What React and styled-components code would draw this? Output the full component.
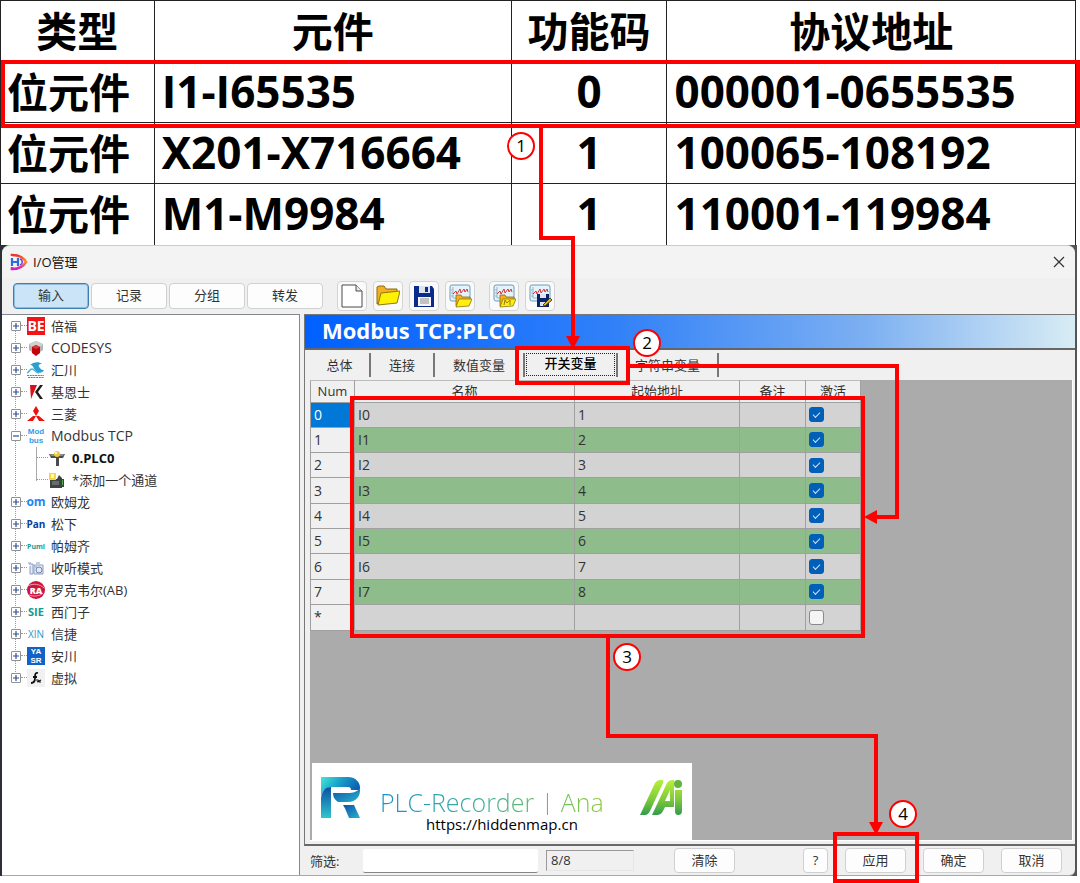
import React from 'react'
import styled, { createGlobalStyle, css } from 'styled-components'

const GlobalStyle = createGlobalStyle`
*, *::before, *::after {
    box-sizing: border-box;
}
body {
    margin: 0;
    background: #fff;
    color: #333;
    font-family: "Open Sans", "Noto Sans CJK SC", sans-serif;
    font-size: 13px;
    font-feature-settings: "calt" 0, "locl" 0;
    line-height: 18px;
}
button, input {
    font: inherit;
    color: inherit;
}
`;

const addresses = [
    { type: '位元件', name: 'I1-I65535', code: '0', range: '000001-0655535' },
    { type: '位元件', name: 'X201-X716664', code: '1', range: '100065-108192' },
    { type: '位元件', name: 'M1-M9984', code: '1', range: '110001-119984' },
];

const switches = ['I0', 'I1', 'I2', 'I3', 'I4', 'I5', 'I6', 'I7'];

function Brand({ text, color, size, y = 13, weight = 700, bg }) {
    return (
        <svg width="18" height="18" viewBox="0 0 18 18" overflow="visible" aria-hidden="true">
            {bg && <rect width="18" height="18" fill={bg} />}
            <text x="9" y={y} fontSize={size} fontWeight={weight} fill={color} textAnchor="middle">{text}</text>
        </svg>
    )
}

function TwoLines({ top, bottom, color, bg }) {
    return (
        <svg width="18" height="18" viewBox="0 0 18 18" overflow="visible" fontFamily="Liberation Sans, sans-serif" fontSize="8" fontWeight="700" aria-hidden="true">
            {bg && <rect width="18" height="18" fill={bg} />}
            <text x="9" y="7" fill={color} textAnchor="middle">{top}</text>
            <text x="9" y="16" fill={color} textAnchor="middle">{bottom}</text>
        </svg>
    )
}

const CodesysIcon = () => (
    <svg width="18" height="18" viewBox="0 0 18 18" aria-hidden="true">
        <path d="M9 2l7 3v6l-3 2V8L9 6 5 8v5l-3-2V5z" fill="#b4b4b4" />
        <path d="M9 2l7 3-3 3-4-2-4 2-3-3z" fill="#d0d0d0" />
        <path d="M9 6l4 2v6l-4 3-4-3V8z" fill="#c4040c" />
        <path d="M9 6l4 2-4 2-4-2z" fill="#d83838" />
    </svg>
)

const InovanceIcon = () => (
    <svg width="18" height="18" viewBox="0 0 18 18" fill="none" aria-hidden="true">
        <path d="M3 4c3-3 9-4 12-1-4 0-4 2-2 4 1 2 3 2 4 2-2 4-7 3-9 0C6 6 6 4 3 4z" fill="#2a9fd0" />
        <path d="M0 12c2-1 3-4 5-4 3 0 3 4 7 4" stroke="#4db3dc" strokeWidth="1.5" />
        <path d="M0 14.5h17M1 16.5h16" stroke="#777" strokeWidth="1.2" strokeDasharray="2 .7" />
    </svg>
)

const KeyenceIcon = () => (
    <svg width="18" height="18" viewBox="0 0 18 18" aria-hidden="true">
        <path d="M3 2h7L4 16z" fill="#d8101c" />
        <path d="M13 2h3l-5 7 5 7h-3L8 9z" fill="#1d1d1d" />
    </svg>
)

const MitsubishiIcon = () => (
    <svg width="18" height="18" viewBox="0 0 18 18" fill="#f01010" aria-hidden="true">
        <path d="M9 1l3 5-3 5-3-5zM6 11h3l-3 5H0zM12 11H9l3 5h6z" />
    </svg>
)

const ListenIcon = () => (
    <svg width="18" height="18" viewBox="0 0 18 18" fill="none" stroke="#8c9cc4" aria-hidden="true">
        <path d="M2 5h4v10H3V7M7 6h9v9H7z" fill="#e4e9f5" />
        <circle cx="12" cy="11" r="3" stroke="#6f84b8" />
        <path d="M1 4h3M9 4h4M8 8h2" />
    </svg>
)

const RockwellIcon = () => (
    <svg width="18" height="18" viewBox="0 0 18 18" aria-hidden="true">
        <circle cx="9" cy="9" r="9" fill="#cd163f" />
        <path d="M1 5c5-3 12-2 16 2M2 14c5 2 11 1 14-2" stroke="#f29aa8" strokeWidth="1" fill="none" />
        <text x="9" y="13" fontSize="9" fontWeight="800" fill="#fff" textAnchor="middle">RA</text>
    </svg>
)

const VirtualIcon = () => (
    <svg width="18" height="18" viewBox="0 0 18 18" aria-hidden="true">
        <rect width="18" height="18" fill="#f1f1f1" />
        <path d="M11 4c-3-1-3 2-3 5s-1 5-4 5M6 8h4" stroke="#111" strokeWidth="1.8" fill="none" />
        <path d="M9 11l2 0 1 2h2M10 13l4-2" stroke="#111" strokeWidth="1.2" fill="none" />
    </svg>
)

const ChannelIcon = () => (
    <svg width="18" height="18" viewBox="0 0 18 18" aria-hidden="true">
        <path d="M1 5h16l-2 4h-4v8H8V9H3z" fill="#4b4b4b" />
        <path d="M2 5h14l-1 2H3z" fill="#8c8c8c" />
        <circle cx="9" cy="5" r="3" fill="#f0c63c" />
        <circle cx="8" cy="4" r="1.3" fill="#fff2b8" />
    </svg>
)

const AddChannelIcon = () => (
    <svg width="18" height="18" viewBox="0 0 18 18" aria-hidden="true">
        <path d="M2 8h7l2-4 3 3v1h2v8h-2v1H2z" fill="#3f4340" />
        <path d="M14 9h1v5h-1z" fill="#4aa84e" />
        <path d="M4 10h7v4H4z" fill="#686c68" />
        <path d="M1 2h7v7H1z" fill="#f6d540" />
        <path d="M3 3h3v4H3z" fill="#fff8ae" />
    </svg>
)

const devices = [
    { label: '倍福', icon: <Brand text="BE" color="#fff" bg="#f01414" size={14} y={14} /> },
    { label: 'CODESYS', latin: true, icon: <CodesysIcon /> },
    { label: '汇川', icon: <InovanceIcon /> },
    { label: '基恩士', icon: <KeyenceIcon /> },
    { label: '三菱', icon: <MitsubishiIcon /> },
    {
        label: 'Modbus TCP', latin: true, open: true,
        icon: <TwoLines top="Mod" bottom="bus" color="#2f9bea" />,
    },
    { label: '欧姆龙', icon: <Brand text="om" color="#1c86f2" size={12} /> },
    { label: '松下', icon: <Brand text="Pan" color="#0b3f9c" size={10} /> },
    { label: '帕姆齐', icon: <Brand text="Pumi" color="#159a94" size={7} y={12} /> },
    { label: '收听模式', icon: <ListenIcon /> },
    { label: '罗克韦尔(AB)', icon: <RockwellIcon /> },
    { label: '西门子', icon: <Brand text="SIE" color="#119a94" size={11} /> },
    { label: '信捷', icon: <Brand text="XIN" color="#2c97c9" size={10} weight={500} /> },
    { label: '安川', icon: <TwoLines top="YA" bottom="SR" color="#fff" bg="#1262c8" /> },
    { label: '虚拟', icon: <VirtualIcon /> },
];

const NewFileIcon = () => (
    <svg width="24" height="24" viewBox="0 0 24 24" aria-hidden="true">
        <path d="M2 1h14l6 6v16H2z" fill="#fff" stroke="#4a4a4a" />
        <path d="M16 1v6h6" fill="#e8e8e8" stroke="#4a4a4a" />
    </svg>
)

const OpenFolderIcon = () => (
    <svg width="24" height="24" viewBox="0 0 24 24" strokeLinejoin="round" aria-hidden="true">
        <path d="M1 20V3l2-1h5l2 3h11v4z" fill="#f4b020" stroke="#8a6a10" />
        <path d="M2 21L5 9l19-2-3 12z" fill="#fff200" stroke="#8a7a10" />
    </svg>
)

const SaveIcon = () => (
    <svg width="24" height="24" viewBox="0 0 24 24" aria-hidden="true">
        <path d="M2 2h18l2 3v18H2z" fill="#0a2a8c" />
        <path d="M7 2h11v7H7z" fill="#dfe3ee" />
        <path d="M13 3h3v5h-3z" fill="#0a2a8c" />
        <path d="M6 13h13v9H6z" fill="#f4f4f4" />
        <path d="M8 15h9M8 17h9M8 19h9" stroke="#8f8f8f" />
    </svg>
)

function ChartIcon({ children }) {
    return (
        <svg width="24" height="24" viewBox="0 0 24 24" strokeLinejoin="round" aria-hidden="true">
            <rect x="2" y="1" width="20" height="16" rx="2" fill="#e3f3fb" stroke="#6f9cb4" />
            <path d="M5 3v11h15M3 6h2M3 9h2M3 12h2" stroke="#8ab" strokeWidth=".8" fill="none" />
            <path d="M5 10l3-3 1 3 3-5 1 4 3-4 1 3 2-3 1 3" stroke="#d8343c" fill="none" />
            {children}
        </svg>
    )
}

const SmallFolder = () => (
    <>
        <path d="M8 22V11h5l1 2h8v3z" fill="#f4b020" stroke="#8a6a10" strokeWidth=".8" />
        <path d="M8 23l3-8h13l-3 7z" fill="#ffee10" stroke="#8a7a10" strokeWidth=".8" />
    </>
)

const AppLogo = () => (
    <svg width="18" height="18" viewBox="0 0 18 18" fill="none" aria-hidden="true">
        <defs>
            <linearGradient id="appRing" x1="0" y1="0" x2="0" y2="1">
                <stop offset="0" stopColor="#f0302c" />
                <stop offset=".45" stopColor="#f79a28" />
                <stop offset="1" stopColor="#d818c8" />
            </linearGradient>
        </defs>
        <path d="M2 3V2c6 0 11 2 14 7-3 5-8 7-14 7v-2" stroke="url(#appRing)" strokeWidth="2.6" />
        <path d="M2 5v8M8 5v8M2 9h6" stroke="#2c6be0" strokeWidth="2.2" />
        <path d="M10 6c3 1 3 5 0 6" stroke="#7b43d8" strokeWidth="1.6" />
    </svg>
)

const RecorderLogo = () => (
    <svg width="40" height="42" viewBox="0 0 40 42" aria-hidden="true">
        <defs>
            <linearGradient id="recTop" x1="0" y1="0" x2="1" y2="0.4">
                <stop offset="0" stopColor="#45e6d8" />
                <stop offset=".5" stopColor="#18a0c8" />
                <stop offset="1" stopColor="#0b5fb0" />
            </linearGradient>
            <linearGradient id="recStem" x1="0" y1="0" x2="0" y2="1">
                <stop offset="0" stopColor="#0c4fa4" />
                <stop offset="1" stopColor="#2fc6cc" />
            </linearGradient>
            <linearGradient id="recLeg" x1="0" y1="0" x2="1" y2="1">
                <stop offset="0" stopColor="#0b50a8" />
                <stop offset="1" stopColor="#28b4cc" />
            </linearGradient>
        </defs>
        <path d="M0 0h27c8 0 13 6 12 13H30c0-2-1-3-3-3H12C5 10 1 13 0 20z" fill="url(#recTop)" />
        <path d="M0 21c1-8 5-11 10-11v31H0z" fill="url(#recStem)" />
        <path d="M12 16h15c5 0 9-1 12-5 1 8-4 14-12 14H17q-5-3-5-9z" fill="url(#recLeg)" />
        <path d="M22 28h11l6 13H28c-2-4-3-9-6-13z" fill="url(#recLeg)" />
    </svg>
)

const AnaLogo = () => (
    <svg width="42" height="36" viewBox="0 0 42 36" aria-hidden="true">
        <defs>
            <linearGradient id="anaFill" gradientUnits="userSpaceOnUse" x1="0" y1="0" x2="0" y2="36">
                <stop offset="0" stopColor="#b8f03c" />
                <stop offset=".5" stopColor="#84ce38" />
                <stop offset="1" stopColor="#2f9850" />
            </linearGradient>
        </defs>
        <path d="M0 35L15 3q2-3 5-3h2q2 0 1 3L10 31q-2 4-5 4z" fill="url(#anaFill)" />
        <path d="M12 35L27 3q2-3 5-3h2v27h-9l-2 4q-2 4-6 4zM30 10l-5 11h5z" fill="url(#anaFill)" fillRule="evenodd" />
        <path d="M35 10h7v21q0 4-4 4-3 0-3-4z" fill="url(#anaFill)" />
        <circle cx="38" cy="4" r="4" fill="#62b43a" />
    </svg>
)

function Annotations() {
    return (
        <>
            <Lines width="1080" height="883" viewBox="0 0 1080 883" aria-hidden="true">
                <g fill="none" stroke="#f00" strokeWidth="4">
                    <rect x="3" y="62" width="1075" height="64" />
                    <path d="M541 127V238H573V338" />
                    <rect x="517" y="348" width="111" height="35" />
                    <path d="M629 366H897V517H875" />
                    <rect x="352" y="398" width="511" height="238" />
                    <path d="M608 637V736H876V824" />
                    <rect x="835" y="834" width="82" height="47" />
                </g>
                <path d="M566 336h14l-7 13zM877 510v14l-13-7zM869 822h14l-7 13z" fill="#f00" />
            </Lines>
            <Step $x={507} $y={132}>1</Step>
            <Step $x={633} $y={329}>2</Step>
            <Step $x={613} $y={643}>3</Step>
            <Step $x={889} $y={800}>4</Step>
        </>
    )
}

function TreeItem({ item }) {
    return (
        <li>
            <TreeRow>
                <Toggle type="button" aria-label={item.label} aria-expanded={!!item.open}>
                    <svg width="8" height="8" viewBox="0 0 8 8" aria-hidden="true">
                        <path d={item.open ? 'M1 4h6' : 'M1 4h6M4 1v6'} stroke="#2f4f9c" strokeWidth="1.2" />
                    </svg>
                </Toggle>
                <Dots />
                {item.icon}
                <TreeLabel $latin={item.latin}>{item.label}</TreeLabel>
            </TreeRow>
            {item.open && (
                <SubTree>
                    <TreeRow as="li">
                        <Dots $wide />
                        <ChannelIcon />
                        <TreeLabel $strong>0.PLC0</TreeLabel>
                    </TreeRow>
                    <TreeRow as="li">
                        <Dots $wide />
                        <AddChannelIcon />
                        <TreeLabel>*添加一个通道</TreeLabel>
                    </TreeRow>
                </SubTree>
            )}
        </li>
    )
}

function App() {
    return (
        <Page>
            <GlobalStyle />
            <AddressTable>
                <colgroup>
                    <col style={{ width: '14.3%' }} />
                    <col style={{ width: '33.2%' }} />
                    <col style={{ width: '14.5%' }} />
                    <col />
                </colgroup>
                <thead>
                    <tr>
                        <th>类型</th>
                        <th>元件</th>
                        <th>功能码</th>
                        <th>协议地址</th>
                    </tr>
                </thead>
                <tbody>
                    {addresses.map((row) => (
                        <tr key={row.name}>
                            <td>{row.type}</td>
                            <ValueCell>{row.name}</ValueCell>
                            <ValueCell $center>{row.code}</ValueCell>
                            <ValueCell>{row.range}</ValueCell>
                        </tr>
                    ))}
                </tbody>
            </AddressTable>
            <Desktop>
                <Window>
                    <TitleBar>
                        <AppLogo />
                        <span>I/O管理</span>
                        <CloseButton type="button" aria-label="关闭">
                            <svg width="12" height="12" viewBox="0 0 12 12" aria-hidden="true">
                                <path d="M1 1l10 10M11 1L1 11" stroke="#333" strokeWidth="1.2" />
                            </svg>
                        </CloseButton>
                    </TitleBar>
                    <Toolbar>
                        <ModeButton type="button" $active>输入</ModeButton>
                        <ModeButton type="button">记录</ModeButton>
                        <ModeButton type="button">分组</ModeButton>
                        <ModeButton type="button">转发</ModeButton>
                        <IconGroup>
                            <IconButton type="button" aria-label="新建"><NewFileIcon /></IconButton>
                            <IconButton type="button" aria-label="打开"><OpenFolderIcon /></IconButton>
                            <IconButton type="button" aria-label="保存"><SaveIcon /></IconButton>
                            <IconButton type="button" aria-label="导入"><ChartIcon><SmallFolder /></ChartIcon></IconButton>
                        </IconGroup>
                        <IconGroup>
                            <IconButton type="button" aria-label="合并">
                                <ChartIcon>
                                    <SmallFolder />
                                    <path d="M12 21l1-5 2 3 3-3v5" stroke="#9a7a00" fill="none" />
                                </ChartIcon>
                            </IconButton>
                            <IconButton type="button" aria-label="导出">
                                <ChartIcon>
                                    <path d="M9 10h12v13H9z" fill="#0a2466" />
                                    <path d="M12 10h6v4h-6zM12 18h6v4h-6z" fill="#dfe3ee" />
                                    <path d="M15 21l7-7 2 2-7 6z" fill="#e8b820" stroke="#222" strokeWidth=".8" />
                                </ChartIcon>
                            </IconButton>
                        </IconGroup>
                    </Toolbar>
                    <Body>
                        <Tree>
                            <TreeList>
                                {devices.map((item) => <TreeItem key={item.label} item={item} />)}
                            </TreeList>
                        </Tree>
                        <Main>
                            <Panel>
                                <PanelTitle>Modbus TCP:PLC0</PanelTitle>
                                <Tabs role="tablist">
                                    <Tab type="button" role="tab" $w={61}>总体</Tab>
                                    <Tab type="button" role="tab" $w={64}>连接</Tab>
                                    <Tab type="button" role="tab" $w={90}>数值变量</Tab>
                                    <Tab type="button" role="tab" $w={93} $active aria-selected="true"><span>开关变量</span></Tab>
                                    <Tab type="button" role="tab" $w={101}>字符串变量</Tab>
                                </Tabs>
                                <GridArea>
                                    <Grid>
                                        <colgroup>
                                            <col style={{ width: 44 }} />
                                            <col style={{ width: 220 }} />
                                            <col style={{ width: 165 }} />
                                            <col style={{ width: 66 }} />
                                            <col style={{ width: 55 }} />
                                        </colgroup>
                                        <thead>
                                            <tr>
                                                <th>Num</th>
                                                <th>名称</th>
                                                <th>起始地址</th>
                                                <th>备注</th>
                                                <th>激活</th>
                                            </tr>
                                        </thead>
                                        <tbody>
                                            {switches.map((name, i) => (
                                                <GridRow key={name} $green={i % 2 === 1}>
                                                    <NumCell $selected={i === 0}>{i}</NumCell>
                                                    <td>{name}</td>
                                                    <td>{i + 1}</td>
                                                    <td></td>
                                                    <td><Check type="checkbox" defaultChecked aria-label={`激活 ${name}`} /></td>
                                                </GridRow>
                                            ))}
                                            <GridRow>
                                                <NumCell>*</NumCell>
                                                <td></td>
                                                <td></td>
                                                <td></td>
                                                <td><Check type="checkbox" aria-label="激活" /></td>
                                            </GridRow>
                                        </tbody>
                                    </Grid>
                                    <Banner>
                                        <RecorderLogo />
                                        <BannerText>
                                            <Product>PLC-Recorder | Ana</Product>
                                            <Site href="https://hiddenmap.cn">https://hiddenmap.cn</Site>
                                        </BannerText>
                                        <AnaLogo />
                                    </Banner>
                                </GridArea>
                            </Panel>
                            <Footer>
                                <FilterLabel htmlFor="filter">筛选:</FilterLabel>
                                <FilterInput id="filter" type="text" />
                                <Count>8/8</Count>
                                <Button type="button">清除</Button>
                                <Actions>
                                    <Button type="button" $small>?</Button>
                                    <Button type="button">应用</Button>
                                    <Button type="button">确定</Button>
                                    <Button type="button">取消</Button>
                                </Actions>
                            </Footer>
                        </Main>
                    </Body>
                </Window>
            </Desktop>
            <Annotations />
        </Page>
    )
}

const Page = styled.div`
    position: relative;
    display: flex;
    flex-direction: column;
    min-height: 100vh;
    padding-bottom: 7px;
    overflow: hidden;
`;

const AddressTable = styled.table`
    width: calc(100% - 4px);
    table-layout: fixed;
    border-collapse: collapse;
    color: #000;
    font-size: 41px;
    font-weight: 700;
    line-height: 60px;
    th, td {
        height: 61px;
        padding: 0 7px;
        border: 1px solid #222;
        border-bottom: 0;
        white-space: nowrap;
    }
    td:first-child {
        padding-left: 6px;
    }
`;

const ValueCell = styled.td`
    font-size: 44px;
    line-height: 58px;
    text-align: ${(props) => (props.$center ? 'center' : 'left')};
    && {
        padding-bottom: 2px;
    }
`;

const Desktop = styled.div`
    flex: 1;
    display: flex;
    margin-right: 3px;
    padding: 0 2px;
    background: linear-gradient(90deg, #2c3036 50%, #555 50%);
`;

const Window = styled.div`
    flex: 1;
    display: flex;
    flex-direction: column;
    min-width: 0;
    border-top: 1px solid #ccc;
    border-bottom: 1px solid #a8a8a8;
    border-radius: 8px 8px 6px 0;
    background: #f0f0f0;
    overflow: hidden;
`;

const TitleBar = styled.header`
    display: flex;
    align-items: center;
    gap: 5px;
    height: 32px;
    padding: 0 8px;
    background: #f3f3f3;
    color: #111;
`;

const CloseButton = styled.button`
    display: flex;
    margin-left: auto;
    padding: 2px;
    border: 0;
    background: none;
`;

const Toolbar = styled.div`
    display: flex;
    align-items: center;
    gap: 2px;
    height: 36px;
    padding-left: 11px;
`;

const ModeButton = styled.button`
    width: 76px;
    height: 26px;
    padding: 0 0 2px;
    border: 1px solid ${(props) => (props.$active ? '#3c7fb1' : '#d0d0d0')};
    border-radius: 4px;
    background: ${(props) => (props.$active ? '#cce4f7' : '#fdfdfd')};
    box-shadow: ${(props) => (props.$active ? 'inset 0 0 0 1px #8fbde0' : 'none')};
`;

const IconGroup = styled.div`
    display: flex;
    gap: 6px;
    margin-left: 12px;
`;

const IconButton = styled.button`
    display: grid;
    place-items: center;
    width: 30px;
    height: 30px;
    padding: 0;
    border: 1px solid #d4d4d4;
    border-radius: 4px;
    background: #fafafa;
`;

const Body = styled.div`
    flex: 1;
    display: grid;
    grid-template-columns: 298px 1fr;
    gap: 4px;
`;

const Tree = styled.nav`
    border-top: 1px solid #828790;
    border-right: 1px solid #828790;
    background: #fff;
`;

const TreeList = styled.ul`
    position: relative;
    margin: 0;
    padding: 0 0 0 9px;
    list-style: none;
    &::before {
        content: "";
        position: absolute;
        top: 11px;
        bottom: 11px;
        left: 13px;
        border-left: 1px dotted #999;
    }
`;

const SubTree = styled.ul`
    margin: 0 0 0 25px;
    padding: 0;
    list-style: none;
    background: linear-gradient(90deg, #aaa 1px, transparent 1px) 0 0 / 100% 34px no-repeat;
`;

const TreeRow = styled.div`
    display: flex;
    align-items: center;
    height: 22px;
`;

const Toggle = styled.button`
    position: relative;
    display: flex;
    width: 10px;
    height: 10px;
    padding: 0;
    border: 1px solid #919191;
    border-radius: 1px;
    background: #fff;
`;

const Dots = styled.span`
    width: ${(props) => (props.$wide ? 12 : 6)}px;
    border-top: 1px dotted #999;
`;

const TreeLabel = styled.span`
    margin-left: 6px;
    font-size: ${(props) => (props.$latin ? 14 : 13)}px;
    font-weight: ${(props) => (props.$strong ? 700 : 400)};
    color: ${(props) => (props.$strong ? '#111' : '#333')};
`;

const Main = styled.main`
    display: flex;
    flex-direction: column;
    min-width: 0;
`;

const Panel = styled.section`
    flex: 1;
    display: flex;
    flex-direction: column;
    border: 1px solid #777;
    border-right: 0;
    border-bottom: 2px solid #696969;
`;

const PanelTitle = styled.h1`
    margin: 0;
    padding-left: 17px;
    height: 35px;
    border-bottom: 2px solid #666;
    background: linear-gradient(90deg, #0060ff, #3080f8 40%, #7db0f2 73%, #d8ecf4);
    color: #fff;
    font-size: 22px;
    line-height: 31px;
`;

const Tabs = styled.div`
    display: flex;
    align-items: flex-end;
    height: 30px;
    padding: 3px 0 3px 5px;
`;

const Tab = styled.button`
    width: ${(props) => props.$w}px;
    height: 24px;
    padding: 0;
    border: 0;
    border-right: 2px solid #777;
    background: #f0f0f0;
    ${(props) => props.$active && css`
        padding: 0 1px;
        font-weight: 500;
        color: #000;
        span {
            display: block;
            height: 23px;
            border: 1px dotted #222;
            line-height: 18px;
        }
    `}
`;

const GridArea = styled.div`
    flex: 1;
    display: flex;
    flex-direction: column;
    justify-content: space-between;
    margin: 0 2px 3px 5px;
    border-right: 1px solid #fff;
    border-bottom: 1px solid #fff;
    background: #ababab;
`;

const Grid = styled.table`
    width: 551px;
    height: 251px;
    table-layout: fixed;
    border-collapse: collapse;
    th, td {
        padding: 0 3px;
        border: 1px solid #a0a0a0;
    }
    td {
        font-size: 14px;
    }
    th {
        height: 22px;
        border-top-color: #bbb;
        background: #f0f0f0;
        font-weight: 400;
    }
    th:first-child {
        padding: 0;
    }
`;

const GridRow = styled.tr`
    height: 25px;
    background: ${(props) => (props.$green ? '#8fbc8b' : '#d3d3d3')};
`;

const NumCell = styled.td`
    background: ${(props) => (props.$selected ? '#0078d7' : '#f0f0f0')};
    color: ${(props) => (props.$selected ? '#fff' : '#333')};
`;

const Check = styled.input`
    appearance: none;
    display: grid;
    place-items: center;
    width: 15px;
    height: 15px;
    margin: 0;
    border: 1px solid #8a8a8a;
    border-radius: 3px;
    background: #f4f4f4;
    &:checked {
        border-color: #005fb8;
        background: #005fb8;
    }
    &:checked::after {
        content: "";
        width: 7px;
        height: 4px;
        margin-bottom: 2px;
        border: solid #cfe2f4;
        border-width: 0 0 1px 1px;
        transform: rotate(-45deg);
    }
`;

const Banner = styled.div`
    display: flex;
    align-items: center;
    width: 380px;
    height: 77px;
    margin-left: 2px;
    padding: 0 10px 8px 9px;
    background: #fff;
`;

const BannerText = styled.div`
    flex: 1;
    display: flex;
    flex-direction: column;
    align-items: flex-start;
    padding: 26px 0 0 19px;
`;

const Product = styled.span`
    background: linear-gradient(90deg, #1590d0, #3faf98 45%, #8cc83c);
    background-clip: text;
    color: transparent;
    font-size: 25px;
    font-weight: 300;
    line-height: 26px;
`;

const Site = styled.a`
    margin-left: 46px;
    color: #000;
    font-size: 15px;
    line-height: 18px;
    text-decoration: none;
`;

const Footer = styled.footer`
    display: flex;
    align-items: center;
    height: 29px;
    padding: 0 13px 0 6px;
`;

const FilterLabel = styled.label`
    width: 53px;
`;

const FilterInput = styled.input`
    width: 175px;
    height: 24px;
    padding: 0 4px;
    border: 0;
    border-bottom: 1px solid #868686;
    border-radius: 2px;
    background: #fff;
`;

const Count = styled.output`
    width: 88px;
    height: 21px;
    margin: 0 40px 0 8px;
    padding-left: 4px;
    border: 1px solid #e6e6e6;
    border-top-color: #999;
    border-left-color: #999;
`;

const Actions = styled.div`
    display: flex;
    gap: 17px;
    margin-left: auto;
`;

const Button = styled.button`
    width: ${(props) => (props.$small ? 25 : 61)}px;
    height: 25px;
    padding: 0 0 2px;
    border: 1px solid #d0d0d0;
    border-radius: 4px;
    background: #fdfdfd;
`;

const Lines = styled.svg`
    position: absolute;
    top: 0;
    left: 0;
    pointer-events: none;
`;

const Step = styled.span`
    position: absolute;
    left: ${(props) => props.$x}px;
    top: ${(props) => props.$y}px;
    width: 28px;
    height: 28px;
    border: 2px solid #f00;
    border-radius: 50%;
    background: #fff;
    color: #000;
    font-size: 17px;
    line-height: 24px;
    text-align: center;
`;

export default App
